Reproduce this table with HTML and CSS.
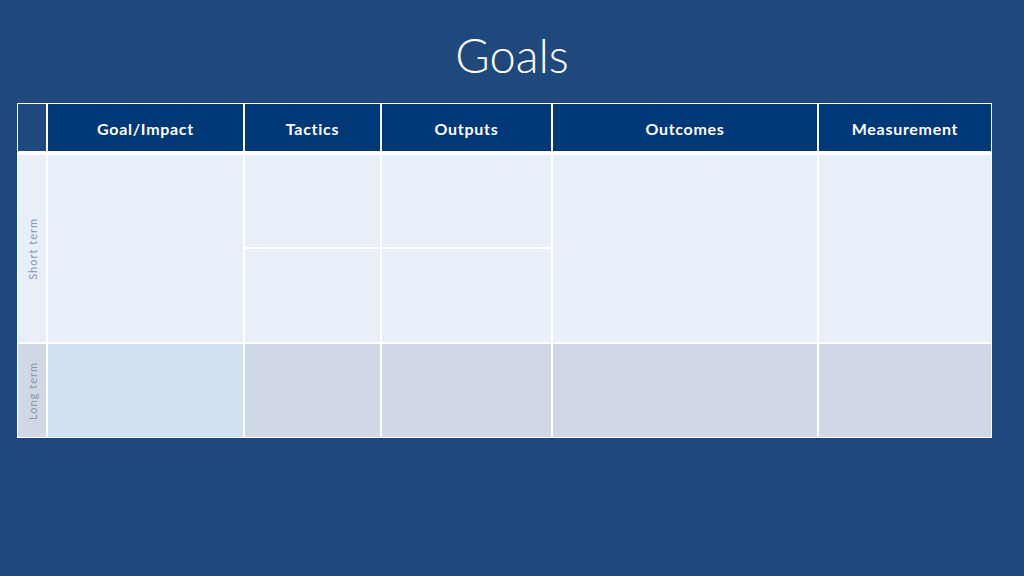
FILE: index.html
```html
<!DOCTYPE html>
<html>
<head>
<meta charset="utf-8">
<link rel="stylesheet" href="styles.css">
</head>
<body>
<div class="slide">
  <div class="title-wrap"><h1 class="title">Goals</h1></div>
  <div class="table">
    <div class="cell head corner"></div>
    <div class="cell head">Goal/Impact</div>
    <div class="cell head">Tactics</div>
    <div class="cell head">Outputs</div>
    <div class="cell head">Outcomes</div>
    <div class="cell head">Measurement</div>

    <div class="cell side short span2"><span class="vlabel">Short term</span></div>
    <div class="cell short span2"></div>
    <div class="cell short"></div>
    <div class="cell short"></div>
    <div class="cell short span2"></div>
    <div class="cell short span2"></div>
    <div class="cell short"></div>
    <div class="cell short"></div>

    <div class="cell side long"><span class="vlabel">Long term</span></div>
    <div class="cell long goal-long"></div>
    <div class="cell long"></div>
    <div class="cell long"></div>
    <div class="cell long"></div>
    <div class="cell long"></div>
  </div>
</div>
</body>
</html>
```
FILE: styles.css
```css
html, body {
  margin: 0;
  padding: 0;
}
body {
  background: #1f497d;
  width: 1024px;
  height: 576px;
  overflow: hidden;
  font-family: "Lato", "Liberation Sans", sans-serif;
}
.slide {
  width: 1024px;
  height: 576px;
}
.title-wrap {
  height: 103px;
  display: flex;
  justify-content: center;
  align-items: flex-start;
}
.title {
  margin: 0;
  padding-top: 32px;
  font-size: 47px;
  line-height: 1;
  font-weight: 300;
  color: #ffffff;
}
.table {
  margin-left: 17px;
  width: 975px;
  box-sizing: border-box;
  padding: 1px;
  background: #ffffff;
  display: grid;
  grid-template-columns: 28px 195px 135px 169px 264px 172px;
  grid-template-rows: 49px 92px 93px 93px;
  gap: 2px;
}
.cell {
  min-width: 0;
}
.head {
  background: #003878;
  color: #ffffff;
  font-weight: 700;
  font-size: 16px;
  letter-spacing: 0.7px;
  display: flex;
  align-items: center;
  justify-content: center;
  margin-bottom: 2px;
  padding-top: 1px;
}
.head.corner {
  background: #1f497d;
}
.short {
  background: #e8eff8;
}
.long {
  background: #d0d8e6;
}
.goal-long {
  background: #cfe0f3;
}
.span2 {
  grid-row: span 2;
}
.side {
  display: flex;
  align-items: center;
  justify-content: center;
}
.vlabel {
  writing-mode: vertical-rl;
  transform: rotate(180deg);
  font-size: 11px;
  letter-spacing: 1px;
  color: #8a95a7;
  font-weight: 400;
}
```
